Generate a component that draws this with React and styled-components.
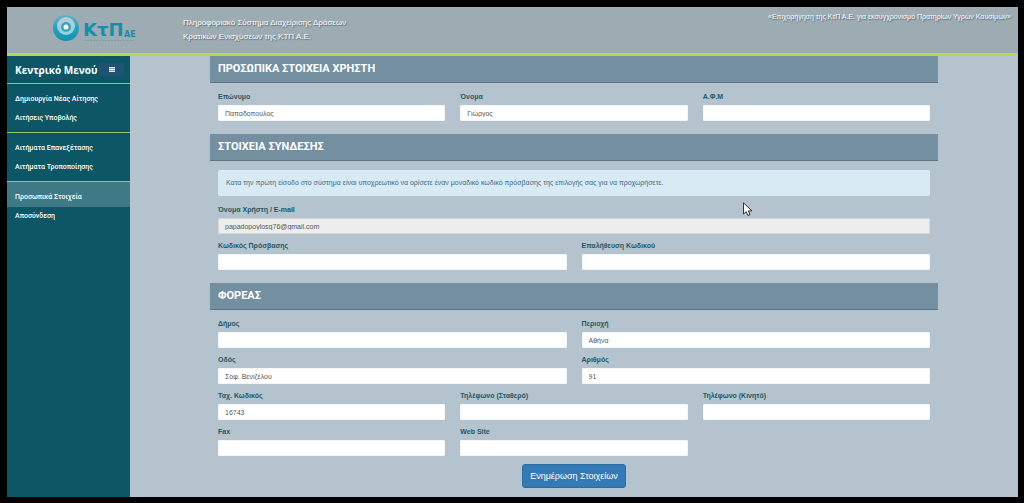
import React from "react";
import styled, { createGlobalStyle } from "styled-components";

const sans = `"Liberation Sans", Arial, sans-serif`;
const humanist = `"Open Sans", "Noto Sans", sans-serif`;

const GlobalStyle = createGlobalStyle`
  *, *::before, *::after { box-sizing: border-box; }
  body { margin: 0; background: #000; font-family: ${sans}; }
`;

const Page = styled.div`
  min-height: 100vh;
  padding: 7px 6px 6px 7px;
  display: flex;
  flex-direction: column;
  background: #000;
`;

const Header = styled.header`
  display: flex;
  align-items: flex-start;
  min-height: 49px;
  background: #9dabb3;
  border-bottom: 3px solid #b9d658;
  color: #fff;
  text-shadow: 1px 1px 1px #56636b;
`;

const LogoLink = styled.a`
  display: block;
  width: 176px;
  padding: 7px 0 0 45px;
  flex: none;
  text-shadow: none;
  svg { display: block; }
`;

const SystemName = styled.p`
  flex: 1;
  margin: 0;
  padding-top: 9px;
  font-size: 8px;
  line-height: 14px;
`;

const Programme = styled.p`
  margin: 0;
  padding: 4px 7px 0 0;
  font-size: 7px;
  line-height: 12px;
`;

const Body = styled.div`
  flex: 1;
  display: flex;
`;

const Sidebar = styled.nav`
  flex: none;
  width: 123px;
  background: #0d5666;
  color: #fff;
`;

const MenuHeading = styled.div`
  display: flex;
  align-items: center;
  justify-content: space-between;
  height: 27px;
  padding: 0 6px 0 8px;
`;

const MenuTitle = styled.h2`
  margin: 0;
  font-family: ${humanist};
  font-size: 10px;
  line-height: 16px;
`;

const MenuToggle = styled.button`
  display: flex;
  align-items: center;
  justify-content: center;
  width: 25px;
  height: 13px;
  padding: 0;
  border: 0;
  border-radius: 1px;
  background: #1f5273;
`;

const MenuGroup = styled.ul`
  margin: 0;
  padding: 0 0 4px;
  list-style: none;
  border-top: 1px solid #8fce62;
  li:first-child a { padding-top: 6px; }
`;

const MenuLink = styled.a`
  display: block;
  padding: 0 8px;
  font-family: Roboto, ${sans};
  font-size: 7px;
  font-weight: 500;
  line-height: 19px;
  color: #fff;
  text-decoration: none;
  background: ${(p) => (p.$active ? "#3f7986" : "transparent")};
`;

const Main = styled.main`
  position: relative;
  flex: 1;
  min-width: 0;
  padding: 0 80px 9px;
  background: #b4c3cd;
`;

const SectionTitle = styled.h2`
  margin: 0;
  padding: 0 8px;
  font-family: Roboto, ${sans};
  font-size: 11px;
  line-height: 26px;
  color: #fff;
  background: #738fa0;
  border-bottom: 1px solid #5c7686;
`;

const Fields = styled.div`
  display: grid;
  grid-template-columns: repeat(${(p) => p.$columns}, 1fr);
  column-gap: 15px;
  padding: 0 8px;
`;

const SectionBody = styled.div`
  padding: 8px 0 ${(p) => (p.$last ? 2 : 7)}px;
`;

const FieldBox = styled.div`
  padding-bottom: 6px;
`;

const Label = styled.label`
  display: block;
  margin-bottom: 2px;
  font-size: 7px;
  font-weight: bold;
  line-height: 12px;
  color: #1f5866;
`;

const Input = styled.input`
  display: block;
  width: 100%;
  height: 16px;
  padding: 0 6px;
  border: 1px solid ${(p) => (p.readOnly ? "#d5d9db" : "#f4f6f7")};
  border-radius: 1px;
  font-family: ${sans};
  font-size: 7px;
  color: #555;
  background: ${(p) => (p.readOnly ? "#ededed" : "#fff")};
  outline: none;
`;

const Notice = styled.p`
  margin: 1px 8px 8px;
  padding: 0 8px;
  font-size: 7px;
  line-height: 26px;
  color: #3a6a85;
  background: #d8ebf5;
  border-radius: 2px;
`;

const SubmitButton = styled.button`
  display: block;
  height: 24px;
  margin: 0 auto;
  padding: 0 7px;
  border: 1px solid #2e6da4;
  border-radius: 3px;
  font-family: ${sans};
  font-size: 9px;
  color: #fff;
  background: #337ab7;
`;

const Pointer = styled.svg`
  position: absolute;
  left: 613px;
  top: 146px;
  pointer-events: none;
`;

function Logo() {
  return (
    <svg width="86" height="36" viewBox="0 0 86 36" role="img" aria-label="ΚτΠ ΑΕ">
      <defs>
        <linearGradient id="orb" x1="0" y1="0" x2="0" y2="1">
          <stop offset="0" stopColor="#5bb3c8" />
          <stop offset="0.5" stopColor="#2a9fbc" />
          <stop offset="1" stopColor="#1590b0" />
        </linearGradient>
        <linearGradient id="glow" x1="0" y1="0" x2="0" y2="1">
          <stop offset="0" stopColor="#b9ccd3" />
          <stop offset="1" stopColor="#8ed3e2" />
        </linearGradient>
      </defs>
      <circle cx="14" cy="14" r="13" fill="url(#orb)" />
      <circle cx="14" cy="12" r="9" fill="url(#glow)" />
      <circle cx="14" cy="13" r="5" fill="#3aa3bc" />
      <circle cx="14" cy="13" r="2.500" fill="#eef9fb" />
      <g fill="#168fab" fontFamily={`"DejaVu Sans", sans-serif`} fontWeight="bold">
        <text x="31" y="22" fontSize="18">ΚτΠ</text>
        <text x="72" y="23" fontSize="8">ΑΕ</text>
      </g>
      <path d="M32 26.500H82" stroke="#5f9fb0" strokeWidth="1" strokeDasharray="2 1" opacity="0.6" />
    </svg>
  );
}

function Field({ id, label, ...input }) {
  return (
    <FieldBox>
      <Label htmlFor={id}>{label}</Label>
      <Input id={id} type="text" {...input} />
    </FieldBox>
  );
}

const menu = [
  ["Δημιουργία Νέας Αίτησης", "Αιτήσεις Υποβολής"],
  ["Αιτήματα Επανεξέτασης", "Αιτήματα Τροποποίησης"],
  ["Προσωπικά Στοιχεία", "Αποσύνδεση"],
];

export default function App() {
  return (
    <Page>
      <GlobalStyle />
      <Header>
        <LogoLink href="#"><Logo /></LogoLink>
        <SystemName>
          Πληροφοριακό Σύστημα Διαχείρισης Δράσεων
          <br />
          Κρατικών Ενισχύσεων της ΚΤΠ Α.Ε.
        </SystemName>
        <Programme>«Επιχορήγηση της ΚτΠ Α.Ε. για εκσυγχρονισμό Πρατηρίων Υγρών Καυσίμων»</Programme>
      </Header>
      <Body>
        <Sidebar>
          <MenuHeading>
            <MenuTitle>Κεντρικό Μενού</MenuTitle>
            <MenuToggle type="button" aria-label="Μενού">
              <svg width="6" height="5" viewBox="0 0 6 5">
                <path d="M0 0h6v5H0z" fill="#8fabc0" />
                <path d="M0 0.500h6M0 2.500h6M0 4.500h6" stroke="#dfe9f0" strokeWidth="1" />
              </svg>
            </MenuToggle>
          </MenuHeading>
          {menu.map((group) => (
            <MenuGroup key={group[0]}>
              {group.map((item) => (
                <li key={item}>
                  <MenuLink href="#" $active={item === "Προσωπικά Στοιχεία"}>{item}</MenuLink>
                </li>
              ))}
            </MenuGroup>
          ))}
        </Sidebar>
        <Main>
          <form>
            <SectionTitle>ΠΡΟΣΩΠΙΚΑ ΣΤΟΙΧΕΙΑ ΧΡΗΣΤΗ</SectionTitle>
            <SectionBody>
              <Fields $columns={3}>
                <Field id="surname" label="Επώνυμο" defaultValue="Παπαδοπουλος" />
                <Field id="name" label="Όνομα" defaultValue="Γιώργος" />
                <Field id="afm" label="Α.Φ.Μ" />
              </Fields>
            </SectionBody>
            <SectionTitle>ΣΤΟΙΧΕΙΑ ΣΥΝΔΕΣΗΣ</SectionTitle>
            <SectionBody>
              <Notice>
                Κατα την πρώτη είσοδο στο σύστημα είναι υποχρεωτικό να ορίσετε έναν μοναδικό κωδικό πρόσβασης της επιλογής σας για να προχωρήσετε.
              </Notice>
              <Fields $columns={1}>
                <Field id="email" label="Όνομα Χρήστη / E-mail" defaultValue="papadopoylosg76@gmail.com" readOnly />
              </Fields>
              <Fields $columns={2}>
                <Field id="password" type="password" label="Κωδικός Πρόσβασης" />
                <Field id="confirm" type="password" label="Επαλήθευση Κωδικού" />
              </Fields>
            </SectionBody>
            <SectionTitle>ΦΟΡΕΑΣ</SectionTitle>
            <SectionBody $last>
              <Fields $columns={2}>
                <Field id="municipality" label="Δήμος" />
                <Field id="area" label="Περιοχή" defaultValue="Αθήνα" />
                <Field id="street" label="Οδός" defaultValue="Σοφ. Βενιζέλου" />
                <Field id="number" label="Αριθμός" defaultValue="91" />
              </Fields>
              <Fields $columns={3}>
                <Field id="postcode" label="Ταχ. Κωδικός" defaultValue="16743" />
                <Field id="phone" label="Τηλέφωνο (Σταθερό)" />
                <Field id="mobile" label="Τηλέφωνο (Κινητό)" />
                <Field id="fax" label="Fax" />
                <Field id="website" label="Web Site" />
              </Fields>
            </SectionBody>
            <SubmitButton type="button">Ενημέρωση Στοιχείων</SubmitButton>
          </form>
          <Pointer width="10" height="15" viewBox="0 0 10 15" aria-hidden="true">
            <path d="M0.500 0.800V12L3.200 9.600L5 13.500L7 12.600L5.300 8.900H9Z" fill="#fff" stroke="#1a1f2b" strokeWidth="0.900" />
          </Pointer>
        </Main>
      </Body>
    </Page>
  );
}
